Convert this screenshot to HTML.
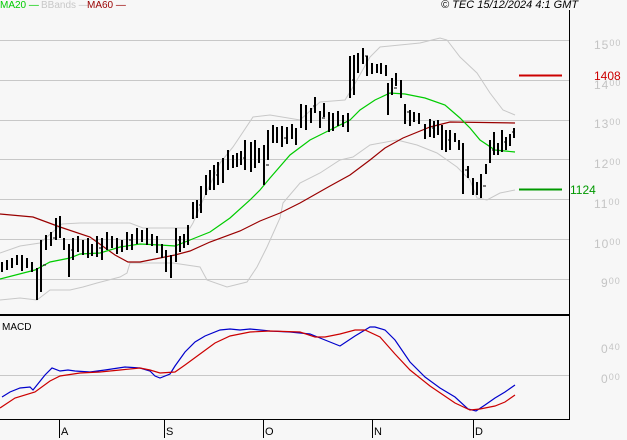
<!DOCTYPE html>
<html><head><meta charset="utf-8"><style>
html,body{margin:0;padding:0;background:#f7f7f7;}
body{width:627px;height:440px;overflow:hidden;position:relative;font-family:"Liberation Sans",sans-serif;}
.t{position:absolute;font-size:10px;line-height:11px;white-space:nowrap;}
.p{position:absolute;font-size:12px;color:#c4c4c4;letter-spacing:1px;}
.p small{font-size:9px;vertical-align:3px;}
</style></head><body>
<svg width="627" height="440" style="position:absolute;left:0;top:0" shape-rendering="crispEdges">
<g stroke="#c8c8c8" stroke-width="1">
<line x1="0" y1="40.5" x2="569" y2="40.5"/><line x1="0" y1="80.5" x2="569" y2="80.5"/>
<line x1="0" y1="120.5" x2="569" y2="120.5"/><line x1="0" y1="159.5" x2="569" y2="159.5"/>
<line x1="0" y1="199.5" x2="569" y2="199.5"/><line x1="0" y1="239.5" x2="569" y2="239.5"/>
<line x1="0" y1="279.5" x2="569" y2="279.5"/><line x1="0" y1="375.5" x2="569" y2="375.5"/>
</g>
<g fill="none" stroke="#c8c8c8" stroke-width="1" shape-rendering="auto">
<polyline points="0,253 20,246 40,243 55,230 62,224 80,223 130,223 143,228 190,228 193,223 203,200 220,163 233,147 253,117 270,115 300,120 320,102 345,100 353,87 370,57 380,47 420,43 440,38 447,40 460,57 477,73 490,93 503,110 515,115"/>
<polyline points="0,300 20,298 37,300 50,290 70,290 83,287 97,283 120,277 127,273 130,263 165,263 173,263 200,267 207,280 227,287 247,282 257,267 267,247 280,218 283,203 300,183 320,173 340,160 353,157 370,145 397,140 417,145 437,153 457,167 470,180 477,198 487,200 500,193 515,190"/>
</g>
<g fill="none" stroke-width="1.2" shape-rendering="auto">
<polyline stroke="#990000" points="0,214 33,217 60,227 90,237 115,255 128,262 140,262 160,258 175,255 190,251 210,242 240,231 260,221 280,213 300,203 330,186 350,175 370,160 385,148 403,138 430,127 450,122 515,123"/>
<polyline stroke="#00cc00" points="0,279 35,270 50,262 70,258 80,254 100,253 120,247 140,244 160,245 175,246 190,240 210,232 230,218 250,200 260,190 270,178 290,155 310,140 330,130 350,120 360,110 375,100 390,93 405,94 425,98 445,105 460,118 470,128 480,140 495,150 515,152"/>
</g>
<path stroke="#000" stroke-width="2" fill="none" d="
M2,262V272M7,260V270M12,258V268M17,255V265M22,255V271M27,258V268M32,262V272M37,268V300M41,240V292M46,235V250M51,232V246M56,218V240M60,216V238M64,238V250M69,244V277M73,238V260M78,236V252M83,240V255M88,238V258M92,244V256M97,236V257M102,238V260M107,232V250M112,236V248M117,238V254M122,240V252M127,232V250M132,234V250M137,228V244M142,230V242M147,228V245M152,234V246M157,236V253M162,244V258M166,250V272M171,255V278M176,228V262M180,236V252M184,234V248M188,225V245M193,202V219M197,200V218M201,186V213M206,175V195M210,170V190M214,165V190M218,162V185M223,158V183M228,150V170M233,155V168M237,153V167M241,151V165M245,140V170M251,142V172M255,140V168M259,148V163M264,145V185M268,130V160M273,125V143M277,127V143M282,126V147M287,127V144M292,124V139M296,128V145M301,104V128M306,105V130M311,108V123M315,97V113M320,111V128M324,103V117M329,112V132M333,113V131M338,111V126M343,115V127M348,113V132M350,56V98M354,55V95M358,53V73M363,48V64M367,56V76M372,63V74M377,64V73M381,63V74M386,65V76M388,83V115M392,78V95M396,73V86M401,80V98M405,104V124M410,110V126M414,112V122M419,113V124M425,124V139M430,119V137M434,121V138M438,120V135M442,125V150M446,130V152M450,130V150M455,133V142M459,140V150M463,143V194M468,166V178M473,178V195M477,182V195M481,174V198M486,164V174M490,140V163M494,132V155M498,143V155M502,130V152M506,137V150M510,134V146M514,128V138"/>
<path stroke="#000" stroke-width="1" fill="none" d="M43,265h3M53,238h3M71,250h3M99,248h3M129,240h3M178,240h3M199,205h3M216,175h3M243,158h3M266,165h3M284,138h3M313,106h3M322,118h3M352,80h3M365,56h3M394,88h3M407,112h3M432,128h3M448,140h3M465,170h3M483,186h3M492,150h3M504,142h3M512,132h3"/>
<g fill="none" stroke-width="1.2" shape-rendering="auto">
<polyline stroke="#0000cc" points="2,397 10,392 20,388 30,387 33,390 45,375 52,368 60,371 68,370 75,371 90,372 105,370 125,367 140,368 150,371 155,376 160,378 170,374 175,366 185,352 195,342 205,336 220,330 230,329 240,330 250,329 270,331 290,332 310,334 320,338 340,346 355,336 370,327 375,327 385,330 395,340 410,362 425,377 440,388 455,397 468,409 476,411 485,405 495,398 505,392 515,385"/>
<polyline stroke="#cc0000" points="0,408 15,398 35,392 50,381 60,376 80,373 100,372 120,370 140,368 150,370 160,373 175,372 185,365 200,354 215,343 230,336 250,332 270,331 300,332 315,337 325,337 340,334 355,330 365,330 380,337 395,354 410,370 430,386 455,403 470,410 480,409 495,406 505,402 515,395"/>
</g>
<line x1="519" y1="75.5" x2="562" y2="75.5" stroke="#cc0000" stroke-width="2"/>
<line x1="519" y1="189.5" x2="562" y2="189.5" stroke="#009900" stroke-width="2"/>
<line x1="569.5" y1="10" x2="569.5" y2="420" stroke="#000" stroke-width="1"/>
<line x1="0" y1="315" x2="570" y2="315" stroke="#000" stroke-width="2"/>
<line x1="0" y1="419.5" x2="570" y2="419.5" stroke="#000" stroke-width="1"/>
<g stroke="#000" stroke-width="1"><line x1="59.5" y1="420" x2="59.5" y2="438"/><line x1="164.5" y1="420" x2="164.5" y2="438"/><line x1="263.5" y1="420" x2="263.5" y2="438"/><line x1="372.5" y1="420" x2="372.5" y2="438"/><line x1="473.5" y1="420" x2="473.5" y2="438"/></g>
</svg>
<div class="t" style="left:0;top:0;color:#00cc00">MA20 —</div>
<div class="t" style="left:41px;top:0;color:#c8c8c8">BBands —</div>
<div class="t" style="left:87px;top:0;color:#990000">MA60 —</div>
<div class="t" style="left:441px;top:0;color:#000;font-style:italic;font-size:11px">© TEC 15/12/2024 4:1 GMT</div>
<div class="t" style="left:2px;top:322px;color:#000;font-size:10px">MACD</div>
<div class="p" style="left:594px;top:38px">15<small>00</small></div>
<div class="p" style="left:594px;top:78px">14<small>00</small></div>
<div class="p" style="left:594px;top:117px">13<small>00</small></div>
<div class="p" style="left:594px;top:157px">12<small>00</small></div>
<div class="p" style="left:594px;top:197px">11<small>00</small></div>
<div class="p" style="left:594px;top:237px">10<small>00</small></div>
<div class="p" style="left:601px;top:276px">9<small>00</small></div>
<div class="p" style="left:601px;top:342px">0<small>40</small></div>
<div class="p" style="left:601px;top:372px">0<small>00</small></div>
<div class="t" style="left:594px;top:71px;color:#cc0000;font-size:12px">1408</div>
<div class="t" style="left:570px;top:185px;color:#009900;font-size:12px">1124</div>
<div class="t" style="left:61px;top:427px;font-size:11px">A</div>
<div class="t" style="left:166px;top:427px;font-size:11px">S</div>
<div class="t" style="left:265px;top:427px;font-size:11px">O</div>
<div class="t" style="left:374px;top:427px;font-size:11px">N</div>
<div class="t" style="left:475px;top:427px;font-size:11px">D</div>
</body></html>
